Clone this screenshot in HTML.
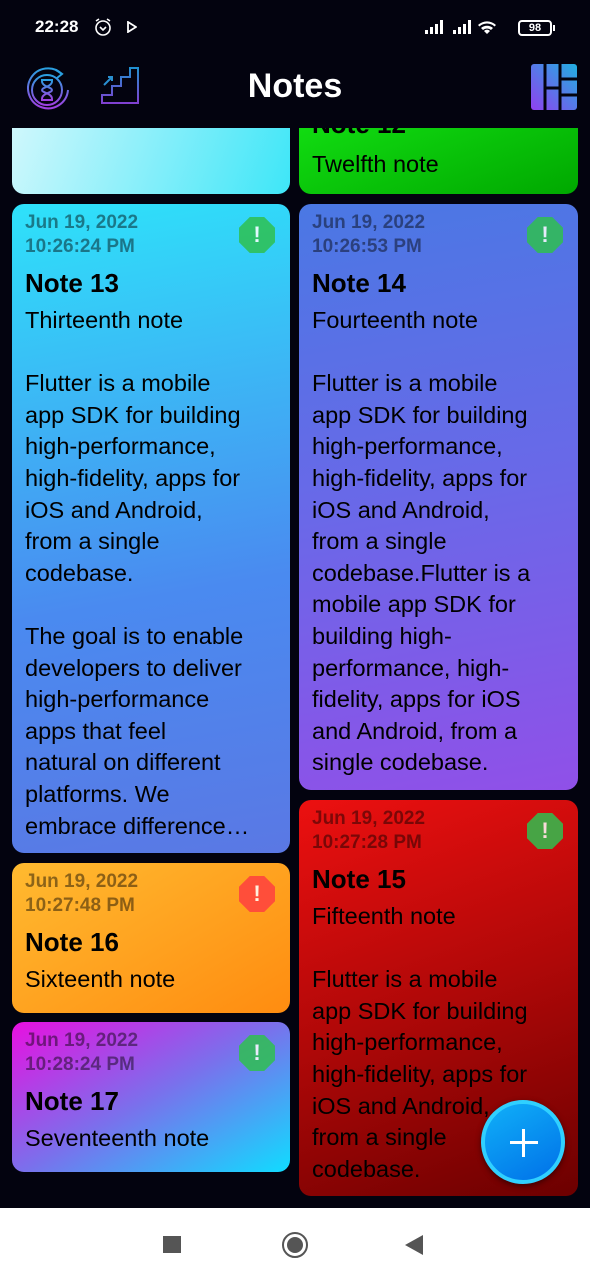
<!DOCTYPE html>
<html><head><meta charset="utf-8">
<style>
*{margin:0;padding:0;box-sizing:border-box}
body{width:590px;height:1280px;background:#03030f;font-family:"Liberation Sans",sans-serif;position:relative;overflow:hidden;color:#000}
.status{position:absolute;top:0;left:0;width:590px;height:56px;color:#fff;font-size:17px;font-weight:bold}
.card{position:absolute;border-radius:12px;overflow:hidden;padding:7px 13px 0 13px}
.date{font-size:19px;font-weight:bold;line-height:24px;color:rgba(0,0,0,0.45)}
.title{font-size:26px;font-weight:bold;line-height:38px;margin-top:5px}
.sub,.body{font-size:23.5px;line-height:31.6px}
.sub{margin-top:3px}
.ic{position:absolute;right:15px;top:13px;width:36px;height:36px;clip-path:polygon(30% 0,70% 0,100% 30%,100% 70%,70% 100%,30% 100%,0 70%,0 30%);color:#fff;font-weight:bold;font-size:22px;text-align:center;line-height:36px;opacity:.85}
.g{background:#30c050}.r{background:#ff4040}
</style></head><body>

<div class="card" style="left:12px;top:100px;width:278px;height:94px;background:linear-gradient(110deg,#d4f8fc,#3ee6f8)"></div>
<div class="card" style="left:299px;top:100px;width:279px;height:94px;background:linear-gradient(160deg,#14e414,#00a800)">
<div class="sub" style="position:absolute;left:13px;top:46px">Twelfth note</div>
<div class="title" style="position:absolute;left:13px;top:5px;margin:0">Note 12</div></div>
<div style="position:absolute;left:0;top:0;width:590px;height:128px;background:#03030f"></div>

<div class="status">
<span style="position:absolute;left:35px;top:17px">22:28</span>
<svg style="position:absolute;left:93px;top:17px" width="20" height="20" viewBox="0 0 20 20" fill="none" stroke="#fff" stroke-width="1.6"><circle cx="10" cy="11" r="7"/><path d="M7 10l3 3 3-3M3 4l3-2M17 4l-3-2"/></svg>
<svg style="position:absolute;left:127px;top:21px" width="10" height="12" viewBox="0 0 10 12"><path d="M1 1l8 5-8 5z" fill="none" stroke="#fff" stroke-width="1.8"/></svg>
<svg style="position:absolute;left:425px;top:19px" width="80" height="16" viewBox="0 0 80 16" fill="#fff"><rect x="0" y="11" width="3" height="4"/><rect x="5" y="8" width="3" height="7"/><rect x="10" y="5" width="3" height="10"/><rect x="15" y="1" width="3" height="14"/><rect x="28" y="11" width="3" height="4"/><rect x="33" y="8" width="3" height="7"/><rect x="38" y="5" width="3" height="10"/><rect x="43" y="1" width="3" height="14"/><path d="M62 15l-3-3a4 4 0 0 1 6 0zM56 9a9 9 0 0 1 12 0l-2 2a6 6 0 0 0-8 0zM53 6a13 13 0 0 1 18 0l-1.5 1.5a11 11 0 0 0-15 0z"/></svg>
<div style="position:absolute;left:518px;top:20px;width:34px;height:16px;border:2px solid #fff;border-radius:4px;font-size:11px;text-align:center;line-height:12px">98</div>
<div style="position:absolute;left:553px;top:25px;width:2px;height:6px;background:#fff"></div>
</div>
<!-- app bar -->
<svg style="position:absolute;left:24px;top:64px" width="48" height="48" viewBox="0 0 48 48" fill="none" stroke-width="2"><defs><linearGradient id="a" x1="0" y1="0" x2="0" y2="1"><stop offset="0" stop-color="#2aa0e0"/><stop offset="1" stop-color="#a040e0"/></linearGradient></defs><path d="M38 10A20 20 0 1 0 44 26" stroke="url(#a)"/><circle cx="23" cy="26" r="15" stroke="url(#a)"/><path d="M17 16h12M17 36h12M18 17c0 6 10 6 10 9s-10 3-10 9M28 17c0 6-10 6-10 9s10 3 10 9" stroke="url(#a)"/><path d="M32 6l6 4-5 4" stroke="#2aa0e0"/></svg>
<svg style="position:absolute;left:100px;top:66px" width="40" height="40" viewBox="0 0 40 40" fill="none" stroke-width="2"><defs><linearGradient id="b" x1="0" y1="0" x2="0" y2="1"><stop offset="0" stop-color="#2090d0"/><stop offset="1" stop-color="#8040d0"/></linearGradient></defs><path d="M2 37h36V2h-8v9h-9v9h-9v9H2z" stroke="url(#b)"/><path d="M4 19l8-8M8 11h4v4" stroke="#2a90d0"/></svg>
<div style="position:absolute;left:0;width:590px;top:66px;text-align:center;color:#fff;font-size:34px;font-weight:bold;line-height:40px">Notes</div>
<svg style="position:absolute;left:531px;top:64px" width="46" height="46" viewBox="0 0 46 46"><defs><linearGradient id="c" x1="0" y1="1" x2="1" y2="0"><stop offset="0" stop-color="#9040f0"/><stop offset="1" stop-color="#20b0e0"/></linearGradient></defs><rect width="46" height="46" rx="3" fill="url(#c)"/><path d="M14 0v46M29 0v46M14 24h15M29 15h17M29 31h17" stroke="#03030f" stroke-width="3"/></svg>

<div class="card" style="left:12px;top:204px;width:278px;height:649px;background:linear-gradient(170deg,#2ee2fa,#4a8af0 60%,#5a78e4)">
<div class="ic g">!</div>
<div class="date">Jun 19, 2022<br>10:26:24 PM</div>
<div class="title">Note 13</div>
<div class="sub">Thirteenth note</div>
<div class="body"><br>Flutter is a mobile<br>app SDK for building<br>high-performance,<br>high-fidelity, apps for<br>iOS and Android,<br>from a single<br>codebase.<br><br>The goal is to enable<br>developers to deliver<br>high-performance<br>apps that feel<br>natural on different<br>platforms. We<br>embrace difference…</div></div>

<div class="card" style="left:299px;top:204px;width:279px;height:586px;background:linear-gradient(170deg,#4a78e4,#6a68e8 50%,#9050e8)">
<div class="ic g">!</div>
<div class="date">Jun 19, 2022<br>10:26:53 PM</div>
<div class="title">Note 14</div>
<div class="sub">Fourteenth note</div>
<div class="body"><br>Flutter is a mobile<br>app SDK for building<br>high-performance,<br>high-fidelity, apps for<br>iOS and Android,<br>from a single<br>codebase.Flutter is a<br>mobile app SDK for<br>building high-<br>performance, high-<br>fidelity, apps for iOS<br>and Android, from a<br>single codebase.</div></div>

<div class="card" style="left:299px;top:800px;width:279px;height:396px;background:linear-gradient(160deg,#ec1010,#b00808 50%,#6c0000)">
<div class="ic g">!</div>
<div class="date">Jun 19, 2022<br>10:27:28 PM</div>
<div class="title">Note 15</div>
<div class="sub">Fifteenth note</div>
<div class="body"><br>Flutter is a mobile<br>app SDK for building<br>high-performance,<br>high-fidelity, apps for<br>iOS and Android,<br>from a single<br>codebase.</div></div>

<div class="card" style="left:12px;top:863px;width:278px;height:150px;background:linear-gradient(150deg,#ffba30,#ff8c10)">
<div class="ic r">!</div>
<div class="date">Jun 19, 2022<br>10:27:48 PM</div>
<div class="title">Note 16</div>
<div class="sub">Sixteenth note</div></div>

<div class="card" style="left:12px;top:1022px;width:278px;height:150px;background:linear-gradient(150deg,#e810e0,#7a70ec 50%,#10dcff)">
<div class="ic g">!</div>
<div class="date">Jun 19, 2022<br>10:28:24 PM</div>
<div class="title">Note 17</div>
<div class="sub">Seventeenth note</div></div>

<div style="position:absolute;left:481px;top:1100px;width:84px;height:84px;border-radius:50%;background:linear-gradient(150deg,#10b0f8,#0070e8);border:4px solid #30d0ff;box-shadow:0 2px 6px rgba(0,0,0,.5)"></div>
<div style="position:absolute;left:510px;top:1141px;width:28px;height:3px;background:#fff"></div>
<div style="position:absolute;left:522px;top:1129px;width:3px;height:28px;background:#fff"></div>

<div style="position:absolute;left:0;top:1208px;width:590px;height:72px;background:#fff"></div>
<div style="position:absolute;left:163px;top:1236px;width:18px;height:17px;background:#555"></div>
<div style="position:absolute;left:282px;top:1232px;width:26px;height:26px;border-radius:50%;border:2px solid #555"></div>
<div style="position:absolute;left:287px;top:1237px;width:16px;height:16px;border-radius:50%;background:#555"></div>
<svg style="position:absolute;left:405px;top:1234px" width="20" height="22"><path d="M0 11L18 1v20z" fill="#555"/></svg>
</body></html>
